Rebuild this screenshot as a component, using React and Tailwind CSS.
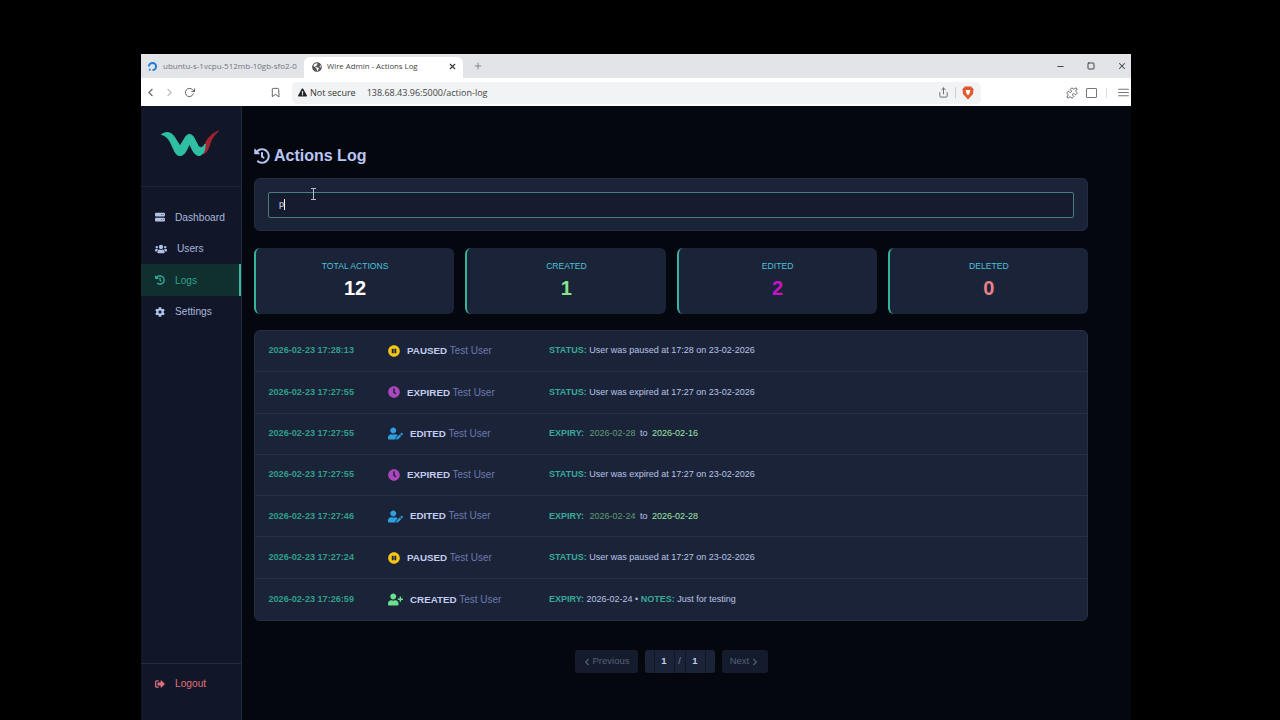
import { FaUsers, FaHistory, FaCog, FaSignOutAlt, FaUserEdit, FaUserPlus, FaPauseCircle, FaClock, FaChevronLeft, FaChevronRight, FaGlobeAmericas, FaExclamationTriangle } from "react-icons/fa";
import { FaServer } from "react-icons/fa6";
import { FiMinus, FiSquare, FiX, FiPlus, FiChevronLeft, FiChevronRight, FiRotateCw, FiBookmark, FiShare, FiMenu } from "react-icons/fi";
import { LuPuzzle } from "react-icons/lu";

const NAV = [
  { label: "Dashboard", icon: FaServer, size: 10, gap: "gap-[10px]" },
  { label: "Users", icon: FaUsers, size: 12, gap: "gap-[10px]" },
  { label: "Logs", icon: FaHistory, size: 10, gap: "gap-[10px]", active: true },
  { label: "Settings", icon: FaCog, size: 10, gap: "gap-[10px]" },
];

const STATS = [
  { label: "TOTAL ACTIONS", value: "12", color: "text-white" },
  { label: "CREATED", value: "1", color: "text-[#86e58b]" },
  { label: "EDITED", value: "2", color: "text-[#c513c5]" },
  { label: "DELETED", value: "0", color: "text-[#e8808c]" },
];

const ACTION_STYLES = {
  PAUSED: { icon: FaPauseCircle, color: "text-[#f5c518]", size: 12, gap: "gap-[7px]" },
  EXPIRED: { icon: FaClock, color: "text-[#ab47bc]", size: 12, gap: "gap-[7px]" },
  EDITED: { icon: FaUserEdit, color: "text-[#2f9fe0]", size: 15, gap: "gap-[7px]" },
  CREATED: { icon: FaUserPlus, color: "text-[#69e08a]", size: 15, gap: "gap-[7px]" },
};

function Status({ text }) {
  return (
    <>
      <span className="font-bold text-[#38a99a]">STATUS:</span> <span className="text-[#b9c4e4]">{text}</span>
    </>
  );
}

function Expiry({ from, to }) {
  return (
    <span className="flex items-center gap-[4.500px]">
      <span className="font-bold text-[#38a99a] mr-px">EXPIRY:</span>
      <span className="text-[#5f9c74]">{from}</span>
      <span className="text-[#b9c4e4]">to</span>
      <span className="text-[#9ce6a6]">{to}</span>
    </span>
  );
}

const ENTRIES = [
  { time: "2026-02-23 17:28:13", action: "PAUSED", detail: <Status text="User was paused at 17:28 on 23-02-2026" /> },
  { time: "2026-02-23 17:27:55", action: "EXPIRED", detail: <Status text="User was expired at 17:27 on 23-02-2026" /> },
  { time: "2026-02-23 17:27:55", action: "EDITED", detail: <Expiry from="2026-02-28" to="2026-02-16" /> },
  { time: "2026-02-23 17:27:55", action: "EXPIRED", detail: <Status text="User was expired at 17:27 on 23-02-2026" /> },
  { time: "2026-02-23 17:27:46", action: "EDITED", detail: <Expiry from="2026-02-24" to="2026-02-28" /> },
  { time: "2026-02-23 17:27:24", action: "PAUSED", detail: <Status text="User was paused at 17:27 on 23-02-2026" /> },
  {
    time: "2026-02-23 17:26:59",
    action: "CREATED",
    detail: (
      <>
        <span className="font-bold text-[#38a99a]">EXPIRY:</span> <span className="text-[#b9c4e4]">2026-02-24 • </span>
        <span className="font-bold text-[#38a99a]">NOTES:</span> <span className="text-[#b9c4e4]">Just for testing</span>
      </>
    ),
  },
];

function Logo() {
  return (
    <svg width="70" height="40" viewBox="0 0 70 40">
      <path d="M49 25 C51 19 54 13 63.500 9 C58 14 56 18 54.500 23 C53 28 51 31 48 32 Z" fill="#a3242f" stroke="#a3242f" strokeWidth="1" />
      <path d="M6.500 12.500 C11 9.500 16 10 19 14.500 L25 24 L30.500 15 C32.500 11.500 36.500 11.500 38.500 15 L43 23.500 C45 26.500 48 26 50 22 C50.500 27 48.500 33.500 44 33.500 C41 33.500 39 31 37.500 28 L34.500 22 L31 29 C28 35 22.500 35 20 30 L16.500 22.500 C14 17 11 13.500 6.500 12.500 Z" fill="#2fbfa5" stroke="#2fbfa5" strokeWidth="1" />
    </svg>
  );
}

function BraveShield() {
  return (
    <svg width="12" height="14" viewBox="0 0 12 14">
      <path d="M3 .5h6L11.500 3 11 8 6 13.500 1 8 .5 3z" fill="#e2572b" />
      <path d="M3.500 4h5L7.500 7.500 6 9.500 4.500 7.500z" fill="#fff" />
    </svg>
  );
}

function Browser() {
  return (
    <div className="[font-family:'Open_Sans',sans-serif]">
      <div className="h-[24px] bg-[#e3e4e8] flex items-center pl-[6px] text-[8px] text-[#555]">
        <div className="w-[151px] flex items-center gap-[5px] overflow-hidden">
          <svg width="11" height="11" viewBox="0 0 12 12" className="shrink-0">
            <path d="M6 11V8.800A2.800 2.800 0 1 0 3.200 6H1A5 5 0 1 1 6 11Z" fill="#1f7fd6" />
            <path d="M2 8.500h2v2H2z" fill="#1f7fd6" />
          </svg>
          <span className="whitespace-nowrap text-[#6f7480]">ubuntu-s-1vcpu-512mb-10gb-sfo2-0</span>
        </div>
        <div className="ml-[6px] w-[159px] h-[21px] mt-[3px] pb-[2px] bg-white rounded-t-[6px] flex items-center pl-[8px] pr-[6px] text-[#444]">
          <FaGlobeAmericas size={10} className="text-[#555] mr-[5px]" />
          <span className="flex-1 whitespace-nowrap text-[7.800px]">Wire Admin - Actions Log</span>
          <FiX size={9} className="text-[#333]" strokeWidth={3} />
        </div>
        <FiPlus size={10} className="ml-[10px] text-[#777]" />
        <div className="ml-auto flex items-center gap-[22px] pr-[4px] text-[#444]">
          <FiMinus size={9} strokeWidth={3} />
          <FiSquare size={8} strokeWidth={3} />
          <FiX size={10} strokeWidth={2.500} />
        </div>
      </div>
      <div className="h-[28px] bg-white flex items-center pl-[3px] pt-px text-[#666]">
        <FiChevronLeft size={13} />
        <FiChevronRight size={13} className="ml-[6px] text-[#bbb]" />
        <FiRotateCw size={11} className="ml-[8px] text-[#555]" />
        <FiBookmark size={11} className="ml-[75px] text-[#555]" />
        <div className="ml-[11px] w-[689px] h-[22px] bg-[#f1f3f5] rounded-[5px] flex items-center pl-[6px] pr-[7px] text-[9px] text-[#333]">
          <FaExclamationTriangle size={9} className="text-[#222]" />
          <span className="ml-[3px] whitespace-nowrap">Not secure</span>
          <span className="ml-[11px] whitespace-nowrap text-[#444]">138.68.43.96:5000/action-log</span>
          <FiShare size={11} className="ml-auto text-[#666]" />
          <div className="w-px h-[11px] bg-[#ccc] mx-[6px]" />
          <BraveShield />
        </div>
        <LuPuzzle size={12} className="ml-[85px] text-[#666]" />
        <div className="ml-[8px] w-[11px] h-[10px] border border-[#777] rounded-[1px]" />
        <div className="w-px h-[10px] bg-[#ddd] ml-[9px]" />
        <FiMenu size={13} className="ml-[10px] text-[#777]" />
      </div>
    </div>
  );
}

function Sidebar() {
  return (
    <aside className="w-[101px] shrink-0 bg-[#111729] border-r border-[#232b3e] flex flex-col">
      <div className="h-[81px] border-b border-[#1d2538] pl-[14px] pt-[16px]">
        <Logo />
      </div>
      <nav className="pt-[14px] flex flex-col">
        {NAV.map((n) => {
          const Icon = n.icon;
          return (
            <div
              key={n.label}
              className={`h-[31.500px] flex items-center pl-[14px] pt-px text-[10.200px] ${n.gap} ${
                n.active ? "bg-[#10302f] text-[#2e9d8a] border-r-2 border-[#36b79f]" : "text-[#a9b6da]"
              }`}
            >
              <Icon size={n.size} className={n.active ? "text-[#37b39b]" : "text-[#b4c1e6]"} />
              <span>{n.label}</span>
            </div>
          );
        })}
      </nav>
      <div className="mt-auto h-[57px] border-t border-[#232b3e] flex items-center pl-[14px] pb-[17px] gap-[10px] text-[10.200px] text-[#e0707c]">
        <FaSignOutAlt size={10} />
        <span>Logout</span>
      </div>
    </aside>
  );
}

function StatCard({ label, value, color }) {
  return (
    <div className="h-[66px] bg-[#1b2338] rounded-[6px] border-l-2 border-[#35b39c] flex flex-col items-center pt-[13px]">
      <div className="text-[8.600px] leading-[11px] text-[#4fc0d8]">{label}</div>
      <div className={`text-[20px] leading-[24px] mt-[4px] font-bold ${color}`}>{value}</div>
    </div>
  );
}

function LogRow({ entry, last }) {
  const style = ACTION_STYLES[entry.action];
  const Icon = style.icon;
  return (
    <div className={`h-[41.300px] flex items-center pl-[13.500px] text-[9px] ${last ? "" : "border-b border-[#262f45]"}`}>
      <div className="w-[119.500px] shrink-0 font-bold text-[9.100px] text-[#2f9f8c]">{entry.time}</div>
      <div className={`w-[161px] shrink-0 flex items-center ${style.gap}`}>
        <Icon size={style.size} className={style.color} />
        <span className="whitespace-nowrap">
          <span className="font-bold text-[9.800px] text-[#c3cdf0]">{entry.action}</span>{" "}
          <span className="text-[10px] text-[#6c7ab0]">Test User</span>
        </span>
      </div>
      <div className="whitespace-nowrap">{entry.detail}</div>
    </div>
  );
}

function Pagination() {
  return (
    <div className="flex justify-center gap-[7px] mt-[29px] text-[9.500px]">
      <div className="w-[63px] h-[23px] bg-[#141b2c] rounded-[3px] flex items-center justify-center gap-[2px] text-[#566178]">
        <FaChevronLeft size={8} />
        <span>Previous</span>
      </div>
      <div className="w-[70px] h-[23px] bg-[#1b2338] rounded-[3px] flex items-center text-[#c3cdf0] font-bold">
        <div className="w-[9px]" />
        <div className="w-[21px] h-full flex items-center justify-center border-x border-[#111729]">1</div>
        <div className="w-[10px] text-center font-normal text-[#7884a6]">/</div>
        <div className="w-[21px] h-full flex items-center justify-center border-x border-[#111729]">1</div>
      </div>
      <div className="w-[46px] h-[23px] bg-[#141b2c] rounded-[3px] flex items-center justify-center gap-[2px] text-[#566178]">
        <span>Next</span>
        <FaChevronRight size={8} />
      </div>
    </div>
  );
}

export default function App() {
  return (
    <div className="w-[1280px] h-[720px] bg-black overflow-hidden pt-[54px] pl-[141px] [font-family:'Liberation_Sans',Arial,sans-serif]">
      <div className="w-[990px] h-[666px] flex flex-col">
        <Browser />
        <div className="flex-1 flex min-h-0 bg-[#05070f]">
          <Sidebar />
          <main className="flex-1 pl-[12px] pr-[43px]">
            <h1 className="h-[72px] pt-[38.500px] flex items-start gap-[4px] text-[#b9c6f5] font-bold text-[16px] leading-[22px]">
              <FaHistory size={16} className="mt-[3px]" />
              <span>Actions Log</span>
            </h1>
            <div className="relative h-[53px] bg-[#1b2338] rounded-[6px] border border-[#232c42] flex items-center px-[13px]">
              <div className="w-full h-[26px] bg-[#151c30] border border-[#4a7f80] rounded-[2px] flex items-center pl-[10px] text-[9px] text-[#d7def5]">
                p<span className="w-px h-[11px] bg-white" />
              </div>
              {/* mouse pointer caught in the capture */}
              <svg width="7" height="12" viewBox="0 0 7 12" className="absolute left-[55px] top-[9px]">
                <path d="M1 .5h5M3.500 .5v11M1 11.500h5" stroke="#b8bec8" strokeWidth="1" fill="none" />
              </svg>
            </div>
            <div className="grid grid-cols-4 gap-[11px] mt-[17px]">
              {STATS.map((s) => (
                <StatCard key={s.label} {...s} />
              ))}
            </div>
            <div className="mt-[16px] bg-[#1b2338] rounded-[6px] border border-[#262f45]">
              {ENTRIES.map((e, i) => (
                <LogRow key={i} entry={e} last={i === ENTRIES.length - 1} />
              ))}
            </div>
            <Pagination />
          </main>
        </div>
      </div>
    </div>
  );
}
